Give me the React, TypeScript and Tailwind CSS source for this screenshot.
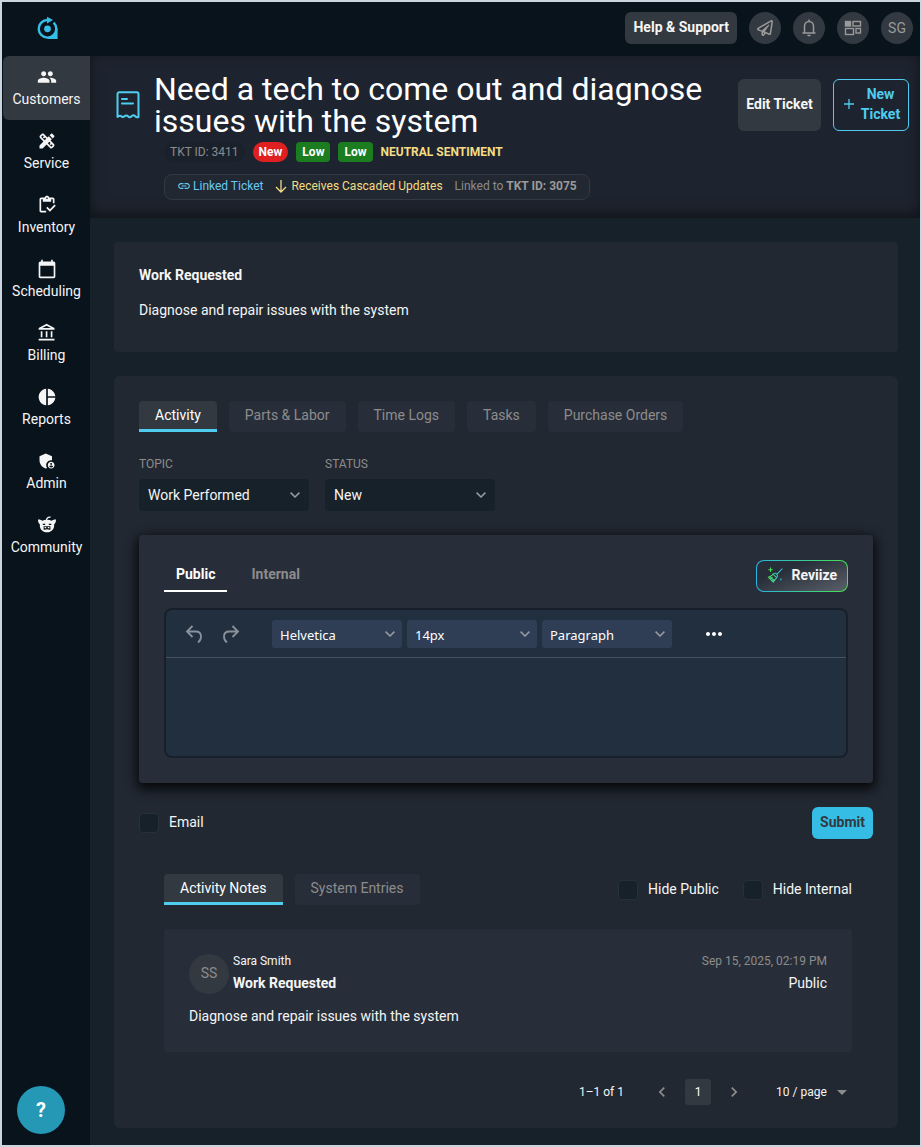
import type { ReactNode } from 'react';
import { FaRegPaperPlane } from 'react-icons/fa';
import {
  MdAdminPanelSettings,
  MdCalendarToday,
  MdChevronLeft,
  MdChevronRight,
  MdDesignServices,
  MdLink,
  MdMoreHoriz,
  MdOutlineAccountBalance,
  MdOutlineInventory,
  MdPeople,
  MdPieChart,
} from 'react-icons/md';

function Logo() {
  return (
    <svg viewBox="0 0 22 24" className="h-6 w-[22px]" fill="#35bde5">
      <path d="M10 4A8.800 8.800 0 1 0 19.300 12.800c0-2.600-1-4.600-2.700-6.200" fill="none" stroke="#35bde5" strokeWidth="2.400" />
      <path d="M20.600 12.500V23H10.500v-1.500c4.800 0 8.700-4 8.700-9z" />
      <path d="M10 .8l6 3.200-6 3.400z" />
      <circle cx="10.500" cy="12.800" r="3.400" />
    </svg>
  );
}

function CommunityIcon() {
  return (
    <svg viewBox="0 0 20 20" className="size-5" fill="currentColor">
      <path d="M9.300 6C9.300 3.200 11 1.800 13.600 2.200" fill="none" stroke="currentColor" strokeWidth="1.300" />
      <path d="M1 4.500c1.700-.2 3.300.4 4.300 1.300C8 4.500 12 4.500 14.700 5.800c1-.9 2.600-1.500 4.300-1.300 0 2.400-.7 4-1.900 4.900.6 4.500-2.700 7.800-7.100 7.800S2.300 13.900 2.900 9.400C1.700 8.500 1 6.900 1 4.500z" />
      <path d="M5.800 8.700h2.400v1.300H5.800zM11.800 8.700h2.400v1.300h-2.400zM6.600 11.300h6.800v3.400H6.600z" fill="#08131c" />
      <path d="M7.600 12h1.600v1.300H7.600zM10.800 12h1.600v1.300h-1.600zM8.500 13.900h3v.5h-3z" />
    </svg>
  );
}

function TicketIcon() {
  return (
    <svg viewBox="0 0 24 28" className="h-7 w-6 shrink-0" fill="none" stroke="#4fcdf0" strokeWidth="2" strokeLinecap="round" strokeLinejoin="round">
      <path d="M1.500 26V3a1.800 1.800 0 0 1 1.800-1.800h17.400A1.800 1.800 0 0 1 22.500 3v23c-1.500.8-2.500.2-3.500-1-1.200-1.200-2.300-1-3.500.3-1.200 1.200-2.300 1.200-3.500 0-1.200-1.200-2.300-1.200-3.500 0C7.300 26.500 6.200 26.200 5 25c-1-.6-2-.2-3.500 1z" />
      <path d="M6 8h5M6 12.500h11" />
    </svg>
  );
}

function BellIcon() {
  return (
    <svg viewBox="0 0 18 18" className="size-[18px]" fill="none" stroke="currentColor" strokeWidth="1.500" strokeLinecap="round" strokeLinejoin="round">
      <path d="M9 1v1.500M3 14h12M4.500 14V7.200C4.500 4.500 6.500 2.600 9 2.600s4.500 1.900 4.500 4.600V14M8 16.600h2" />
    </svg>
  );
}

function AppsIcon() {
  return (
    <svg viewBox="0 0 18 16" className="h-4 w-[18px]" fill="none" stroke="currentColor" strokeWidth="1.400">
      <rect x="1.500" y="1.500" width="5" height="4.500" fill="currentColor" />
      <rect x="9" y="1.500" width="7.500" height="4.500" />
      <rect x="1.500" y="8.500" width="8" height="6" />
      <rect x="12" y="8.500" width="4.500" height="4.500" />
    </svg>
  );
}

function BroomIcon() {
  return (
    <svg viewBox="0 0 18 18" className="size-4" fill="none" strokeWidth="1.200" strokeLinecap="round" strokeLinejoin="round">
      <defs>
        <linearGradient id="broom" x1="0" y1="0" x2="1" y2="0">
          <stop offset="0" stopColor="#4ade5a" />
          <stop offset="1" stopColor="#2bb5e0" />
        </linearGradient>
      </defs>
      <path d="M17 2l-5.500 5.700M7.500 7.500c1.300-.8 2.500-.6 3.500.4s1.200 2.200.4 3.500L7 17 1.500 11.500c2-.2 4-2 6-4zM6.500 8l4.500 4M4 11.500L8 15.500M4 13.500l2-1.500M6 15.500l2-1.500" stroke="url(#broom)" />
      <path d="M4 1v4M2 3h4" stroke="#4ade5a" />
      <rect x="14.500" y="13" width="2" height="2" fill="#2b9fb5" />
    </svg>
  );
}

function UndoIcon({ flip = false }: { flip?: boolean }) {
  return (
    <svg viewBox="0 0 18 18" className={flip ? 'size-[18px] -scale-x-100' : 'size-[18px]'} fill="none" stroke="currentColor" strokeWidth="1.800">
      <path d="M7.500 1L2 6.500 7.500 12M2 6.500h8.500c3.300 0 5.500 2 5.500 5 0 2.500-1 4.500-3 6" />
    </svg>
  );
}

function Caret({ className }: { className: string }) {
  return (
    <svg viewBox="0 0 10 6" className={`pointer-events-none absolute ${className}`} fill="none" stroke="#969ba1" strokeWidth="1.500">
      <path d="M.6.6L5 5 9.400.6" />
    </svg>
  );
}

const navItems = [
  { label: 'Customers', icon: <MdPeople size={20} />, active: true },
  { label: 'Service', icon: <MdDesignServices size={20} /> },
  { label: 'Inventory', icon: <MdOutlineInventory size={20} /> },
  { label: 'Scheduling', icon: <MdCalendarToday size={20} /> },
  { label: 'Billing', icon: <MdOutlineAccountBalance size={20} /> },
  { label: 'Reports', icon: <MdPieChart size={20} /> },
  { label: 'Admin', icon: <MdAdminPanelSettings size={20} /> },
  { label: 'Community', icon: <CommunityIcon /> },
];

const tabs = ['Activity', 'Parts & Labor', 'Time Logs', 'Tasks', 'Purchase Orders'];

function RoundButton({ label, children }: { label: string; children: ReactNode }) {
  return (
    <button aria-label={label} className="flex size-8 items-center justify-center rounded-full bg-[#323941] text-sm text-[#9a9a9a]">
      {children}
    </button>
  );
}

function Tab({ label, active }: { label: string; active?: boolean }) {
  return (
    <button
      role="tab"
      aria-selected={!!active}
      className={
        active
          ? 'h-[31px] rounded-t border-b-3 border-[#4fcdf0] bg-[#323941] px-4 text-sm leading-7 text-white'
          : 'h-[31px] rounded bg-[#282e39] px-4 pb-1 text-sm text-[#8c8c8c]'
      }
    >
      {label}
    </button>
  );
}

function Field({ id, label, value }: { id: string; label: string; value: string }) {
  return (
    <div className="w-[170px]">
      <label htmlFor={id} className="block text-xs leading-4 text-[#8c8c8c]">{label}</label>
      <div className="relative mt-[7px]">
        <select id={id} className="h-8 w-full appearance-none rounded bg-[#16212a] px-[9px] text-sm">
          <option>{value}</option>
        </select>
        <Caret className="top-[13px] right-[9px] h-[6px] w-[10px]" />
      </div>
    </div>
  );
}

function ToolbarSelect({ label, value }: { label: string; value: string }) {
  return (
    <div className="relative">
      <select
        aria-label={label}
        className="h-7 w-[130px] appearance-none rounded-[3px] bg-[#2f3e55] px-2 pt-1 font-['Noto_Sans',sans-serif] text-[13px] text-white"
      >
        <option>{value}</option>
      </select>
      <Caret className="top-[11px] right-[7px] h-[6px] w-[10px]" />
    </div>
  );
}

function Checkbox({ label }: { label: string }) {
  return (
    <label className="flex items-center gap-[10px] text-sm">
      <input type="checkbox" className="size-5 appearance-none rounded border border-[#26303a] bg-[#16212a]" />
      <span className="pb-[2px]">{label}</span>
    </label>
  );
}

export default function App() {
  return (
    <div className="flex min-h-screen flex-col border-2 border-[#cbd5e0] bg-[#08131c] font-[Roboto,sans-serif] text-[#f5f5f5]">
      {/* Top bar */}
      <header className="flex h-[54px] items-center justify-between pr-[7px] pb-[2px]">
        <a href="#" aria-label="Home" className="flex w-[89px] justify-center pl-[2px]">
          <Logo />
        </a>
        <div className="flex gap-3">
          <button className="h-8 rounded-md bg-[#323941] px-2 pb-[2px] text-sm font-bold">Help &amp; Support</button>
          <RoundButton label="Send"><FaRegPaperPlane size={16} /></RoundButton>
          <RoundButton label="Notifications"><BellIcon /></RoundButton>
          <RoundButton label="Apps"><AppsIcon /></RoundButton>
          <RoundButton label="Account">SG</RoundButton>
        </div>
      </header>

      <div className="flex flex-1">
        {/* Sidebar */}
        <nav className="w-[88px] shrink-0 pl-px">
          {navItems.map((item) => (
            <a
              key={item.label}
              href="#"
              className={`flex h-16 flex-col items-center pt-[11px] text-sm ${item.active ? 'rounded-l-md bg-[#323941]' : ''}`}
            >
              {item.icon}
              <span className="mt-[2px] leading-5">{item.label}</span>
            </a>
          ))}
        </nav>

        <main className="min-w-0 flex-1 bg-[#16212a]">
          {/* Ticket header */}
          <section className="flex h-[162px] justify-between gap-8 bg-[#1e242f] pr-[11px] pl-[26px] shadow-[inset_0_-4px_14px_rgba(0,0,0,0.5)]">
            <div className="flex min-w-0 gap-[14px] pt-[17px]">
              <div className="pt-[18px]">
                <TicketIcon />
              </div>
              <div className="min-w-0">
                <h1 className="text-[32px] leading-8 text-white">Need a tech to come out and diagnose issues with the system</h1>
                <div className="mt-[5px] ml-[10px] flex items-center gap-2 text-xs leading-5">
                  <span className="rounded-full bg-[#1a212b] px-[6px] text-[#8c8c8c]">TKT ID: 3411</span>
                  <span className="rounded-full bg-[#e02020] px-[6px] font-bold text-white">New</span>
                  <span className="rounded bg-[#1c7d20] px-[6px] font-bold text-white">Low</span>
                  <span className="rounded bg-[#1c7d20] px-[6px] font-bold text-white">Low</span>
                  <span className="font-bold text-[#f5dc84]">NEUTRAL SENTIMENT</span>
                </div>
                <div className="mt-3 ml-[10px] flex h-[26px] w-fit items-center gap-3 rounded-lg border border-[#323941] bg-[#212832] px-3 pb-[2px] text-xs whitespace-nowrap">
                  <a href="#" className="flex items-center gap-[2px] text-[#69c8f5]">
                    <MdLink size={14} />
                    Linked Ticket
                  </a>
                  <span className="flex items-center gap-1 text-[#f5dc84]">
                    <svg viewBox="0 0 12 14" className="h-[14px] w-3" fill="none" stroke="currentColor" strokeWidth="1.300">
                      <path d="M6 1v12M1 8l5 5 5-5" />
                    </svg>
                    Receives Cascaded Updates
                  </span>
                  <span className="text-[#8c8c8c]">
                    Linked to <b className="text-[#9a9a9a]">TKT ID: 3075</b>
                  </span>
                </div>
              </div>
            </div>
            <div className="mt-[23px] flex h-[52px] shrink-0 gap-3 text-sm font-bold">
              <button className="w-[83px] rounded-md bg-[#323941] pb-[2px] whitespace-nowrap">Edit Ticket</button>
              <button className="flex w-[76px] items-center justify-center gap-[7px] rounded-md border border-[#4fcdf0] pb-[2px] pl-[2px] leading-5 text-[#4fcdf0]">
                <svg viewBox="0 0 10 10" className="size-[10px] shrink-0" stroke="currentColor" strokeWidth="1.300">
                  <path d="M5 0v10M0 5h10" />
                </svg>
                <span>New<br />Ticket</span>
              </button>
            </div>
          </section>

          <div className="flex flex-col gap-6 pt-6 pr-[22px] pb-4 pl-6">
            {/* Work requested */}
            <section className="h-[110px] rounded bg-[#212832] p-[25px] text-sm leading-4">
              <h2 className="font-bold">Work Requested</h2>
              <p className="mt-[19px]">Diagnose and repair issues with the system</p>
            </section>

            <section className="rounded-md bg-[#212832] px-[25px] pt-[25px] pb-[23px]">
              <div role="tablist" className="flex gap-3">
                {tabs.map((tab, index) => (
                  <Tab key={tab} label={tab} active={index === 0} />
                ))}
              </div>

              <div className="mt-6 flex gap-4">
                <Field id="topic" label="TOPIC" value="Work Performed" />
                <Field id="status" label="STATUS" value="New" />
              </div>

              {/* Editor */}
              <div className="mt-6 rounded bg-[#282e39] p-[25px] shadow-[0_4px_12px_2px_rgba(0,0,0,0.85)]">
                <div className="flex items-start justify-between text-sm font-bold">
                  <div role="tablist" className="flex gap-3">
                    <button role="tab" aria-selected="true" className="h-8 border-b-2 border-white px-3 pb-[2px] text-white">Public</button>
                    <button role="tab" aria-selected="false" className="h-8 border-b-2 border-transparent px-3 pb-[2px] text-[#8c8c8c]">Internal</button>
                  </div>
                  <button className="flex h-8 items-center gap-2 rounded-lg border border-transparent px-[10px] pb-[2px] [background:linear-gradient(160deg,#282e39_30%,#5a6068)_padding-box,linear-gradient(90deg,#2bb5e0,#45e04f)_border-box]">
                    <BroomIcon />
                    Reviize
                  </button>
                </div>
                <div className="mt-4 overflow-hidden rounded-lg border-2 border-[#17202a] bg-[#222f3e]">
                  <div className="flex h-12 items-center border-b border-[#455160] px-[19px] text-[#8a919a]">
                    <button aria-label="Undo"><UndoIcon /></button>
                    <button aria-label="Redo" className="ml-[19px]"><UndoIcon flip /></button>
                    <div className="ml-8 flex gap-[5px]">
                      <ToolbarSelect label="Font" value="Helvetica" />
                      <ToolbarSelect label="Font size" value="14px" />
                      <ToolbarSelect label="Block" value="Paragraph" />
                    </div>
                    <button aria-label="More" className="ml-[30px] text-white"><MdMoreHoriz size={24} /></button>
                  </div>
                  <textarea aria-label="Note" className="block h-[98px] w-full resize-none p-4 outline-none" />
                </div>
              </div>

              <div className="mt-6 flex items-center justify-between">
                <Checkbox label="Email" />
                <button className="h-8 rounded-md bg-[#35bde5] px-2 pb-[2px] text-sm font-bold text-[#323941]">Submit</button>
              </div>

              {/* Notes */}
              <div className="mt-[35px] pr-[21px] pl-[25px]">
                <div className="flex items-center justify-between">
                  <div role="tablist" className="flex gap-3">
                    <Tab label="Activity Notes" active />
                    <Tab label="System Entries" />
                  </div>
                  <div className="flex gap-6">
                    <Checkbox label="Hide Public" />
                    <Checkbox label="Hide Internal" />
                  </div>
                </div>

                <article className="mt-6 h-[123px] rounded bg-[#282e39] p-[25px] text-sm">
                  <div className="flex items-start gap-1">
                    <div className="flex size-10 items-center justify-center rounded-full bg-[#323941] pb-[2px] text-[#8c8c8c]">SS</div>
                    <div className="flex-1 leading-[22px]">
                      <p className="-mt-1 text-xs leading-[22px]">Sara Smith</p>
                      <p className="font-bold">Work Requested</p>
                    </div>
                    <div className="text-right leading-[22px]">
                      <p className="-mt-1 text-xs leading-[22px] text-[#8c8c8c]">Sep 15, 2025, 02:19 PM</p>
                      <p>Public</p>
                    </div>
                  </div>
                  <p className="mt-3 leading-5">Diagnose and repair issues with the system</p>
                </article>

                <div className="mt-[27px] flex items-center justify-end pr-[5px] text-xs">
                  <span>1–1 of 1</span>
                  <div className="mx-7 flex items-center gap-[13px] text-[#8c8c8c]">
                    <button aria-label="Previous page"><MdChevronLeft size={20} /></button>
                    <button aria-current="page" className="size-[26px] rounded-[3px] bg-[#323941] text-white">1</button>
                    <button aria-label="Next page"><MdChevronRight size={20} /></button>
                  </div>
                  <div className="relative">
                    <select aria-label="Rows per page" className="appearance-none pr-5 pl-1">
                      <option>10 / page</option>
                    </select>
                    <svg viewBox="0 0 10 5" className="pointer-events-none absolute top-[6px] right-0 h-[5px] w-[10px]" fill="#8c8c8c">
                      <path d="M0 0h10L5 5z" />
                    </svg>
                  </div>
                </div>
              </div>
            </section>
          </div>
        </main>
      </div>

      <button aria-label="Help" className="fixed bottom-[13px] left-[17px] size-12 rounded-full bg-[#2498b5] text-xl font-bold text-white">?</button>
    </div>
  );
}
